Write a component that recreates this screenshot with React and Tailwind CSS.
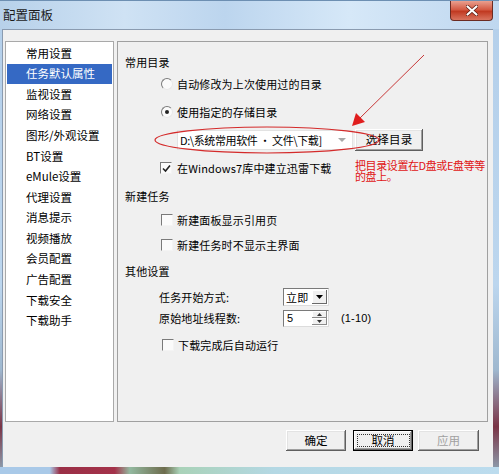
import React from "react";

const cjk = "font-['Noto_Sans_CJK_SC','Microsoft_YaHei',sans-serif]";

const menu = [
  "常用设置",
  "任务默认属性",
  "监视设置",
  "网络设置",
  "图形/外观设置",
  "BT设置",
  "eMule设置",
  "代理设置",
  "消息提示",
  "视频播放",
  "会员配置",
  "广告配置",
  "下载安全",
  "下载助手",
];

function Radio({ checked }) {
  return (
    <span className="w-[12px] h-[12px] rounded-full border border-t-[#7a7a7a] border-l-[#7a7a7a] border-r-[#e8e8e8] border-b-[#e8e8e8] bg-[#fafafa] flex items-center justify-center shrink-0">
      {checked && <span className="w-[4px] h-[4px] rounded-full bg-[#222]" />}
    </span>
  );
}

function Check({ checked }) {
  return (
    <span className="w-[12px] h-[12px] border border-t-[#7a7a7a] border-l-[#7a7a7a] border-r-[#f4f4f4] border-b-[#f4f4f4] bg-[#fbfbfb] flex items-center justify-center shrink-0">
      {checked && (
        <svg width="9" height="9" viewBox="0 0 9 9">
          <path d="M1 4.5 L3.5 7 L8 1.5" fill="none" stroke="#222" strokeWidth="1.6" />
        </svg>
      )}
    </span>
  );
}

function Btn({ children, focused, disabled, className = "" }) {
  return (
    <div
      className={
        "h-[21px] bg-[#f0f0f0] flex items-center justify-center text-[11.5px] leading-none " +
        (focused
          ? "border border-black shadow-[inset_-1px_-1px_0_#696969,inset_1px_1px_0_#ffffff,inset_-2px_-2px_0_#a0a0a0] "
          : "shadow-[inset_-1px_-1px_0_#5f5f5f,inset_1px_1px_0_#ffffff,inset_-2px_-2px_0_#a0a0a0,inset_2px_2px_0_#e3e3e3] ") +
        (disabled ? "text-[#a0a0a0] " : "text-black ") +
        className
      }
    >
      {focused ? (
        <span className="border border-dotted border-[#333] px-[14px] h-[13px] flex items-center">{children}</span>
      ) : (
        children
      )}
    </div>
  );
}

function Row({ className = "", children }) {
  return (
    <div className={"h-[20px] flex items-center text-[11px] tracking-[0.15px] leading-none " + className}>
      {children}
    </div>
  );
}

export default function App() {
  return (
    <div
      className={
        "relative w-[499px] h-[474px] overflow-hidden flex flex-col bg-[linear-gradient(180deg,#b4cfea_0%,#bcd6ee_60%,#9fb8cf_78%,#7a3446_90%,#8fa9b8_100%)] " +
        cjk
      }
    >
      {/* title bar */}
      <div className="h-[29px] shrink-0 flex items-center justify-between border-t border-[#6d8fb2] bg-[linear-gradient(90deg,#b7d1ea_0%,#cfe2f4_25%,#bcd5ee_45%,#d6e8f8_70%,#bfd7ef_100%)]">
        <span className="pl-[3px] text-[12.5px] text-[#1b1b1b] leading-none">配置面板</span>
        <div className="self-start w-[43px] h-[20px] mr-[6px] rounded-b-[4px] border border-t-0 border-[#6b2b22] bg-[linear-gradient(180deg,#e9a08f_0%,#d45a43_45%,#c13a22_55%,#d9745f_100%)] flex items-center justify-center">
          <svg width="12" height="11" viewBox="0 0 12 11">
            <path d="M1.5 1.5 L10.5 9.5 M10.5 1.5 L1.5 9.5" stroke="#5a1a10" strokeWidth="3.6" strokeLinecap="round" />
            <path d="M1.5 1.5 L10.5 9.5 M10.5 1.5 L1.5 9.5" stroke="#ffffff" strokeWidth="2.2" strokeLinecap="round" />
          </svg>
        </div>
      </div>

      {/* client area */}
      <div className="ml-[2px] w-[491px] h-[438px] shrink-0 bg-[#f0f0f0] border-l border-t border-[#8a9bb0] flex flex-col">
        <div className="flex pt-[11px] pl-[2px] gap-[3px]">
          {/* left list */}
          <div className="w-[109px] h-[381px] bg-white border border-[#a9a9a9] pt-[1px] px-[1px]">
            {menu.map((m, i) => (
              <div
                key={m}
                className={
                  "h-[20.6px] flex items-center pl-[19px] text-[11.5px] leading-none " +
                  (i === 1 ? "bg-[#3569c4] text-white" : "text-black")
                }
              >
                {m}
              </div>
            ))}
          </div>

          {/* right panel */}
          <div className="w-[371px] h-[381px] border border-[#a0a0a0] flex flex-col pt-[10px] text-black">
            <Row className="pl-[7px]">常用目录</Row>
            <Row className="pl-[43px] gap-[4px] mt-[2px]">
              <Radio />
              <span>自动修改为上次使用过的目录</span>
            </Row>
            <Row className="pl-[43px] gap-[4px] mt-[8px]">
              <Radio checked />
              <span>使用指定的存储目录</span>
            </Row>
            <Row className="pl-[59px] mt-[8px] gap-[2px]">
              <div className="w-[176px] h-[20px] bg-white border border-[#e2e2e2] flex items-center justify-between pl-[2px] pr-[6px] overflow-hidden">
                <span className="whitespace-nowrap text-[11px] tracking-[-0.4px]">D:\系统常用软件 · 文件\下载]</span>
                <svg width="8" height="5" viewBox="0 0 8 5" className="shrink-0">
                  <path d="M0 0 H8 L4 4 Z" fill="#a8a8a8" />
                </svg>
              </div>
              <Btn className="w-[68px] h-[22px]">选择目录</Btn>
            </Row>
            <Row className="pl-[42px] gap-[5px] mt-[8px]">
              <Check checked />
              <span>在Windows7库中建立迅雷下载</span>
            </Row>
            <Row className="pl-[7px] mt-[8px]">新建任务</Row>
            <Row className="pl-[43px] gap-[4px] mt-[4px]">
              <Check />
              <span>新建面板显示引用页</span>
            </Row>
            <Row className="pl-[43px] gap-[4px] mt-[5px]">
              <Check />
              <span>新建任务时不显示主界面</span>
            </Row>
            <Row className="pl-[7px] mt-[6px]">其他设置</Row>
            <Row className="pl-[41px] mt-[6px]">
              <span className="w-[124px]">任务开始方式:</span>
              <div className="w-[46px] h-[18px] bg-white border border-t-[#7a7a7a] border-l-[#7a7a7a] border-r-[#dcdcdc] border-b-[#dcdcdc] flex items-center justify-between pl-[2px] pr-[1px]">
                <span>立即</span>
                <span className="w-[15px] h-[14px] bg-[#f0f0f0] shadow-[inset_-1px_-1px_0_#696969,inset_1px_1px_0_#ffffff] flex items-center justify-center">
                  <svg width="7" height="4" viewBox="0 0 7 4">
                    <path d="M0 0 H7 L3.5 4 Z" fill="#000" />
                  </svg>
                </span>
              </div>
            </Row>
            <Row className="pl-[41px] mt-[1px]">
              <span className="w-[124px]">原始地址线程数:</span>
              <div className="w-[46px] h-[17px] bg-white border border-t-[#7a7a7a] border-l-[#7a7a7a] border-r-[#dcdcdc] border-b-[#dcdcdc] flex items-center justify-between pl-[3px] pr-[1px]">
                <span className="font-['Liberation_Sans',sans-serif]">5</span>
                <span className="w-[15px] h-[14px] flex flex-col">
                  <span className="flex-1 bg-[#f0f0f0] shadow-[inset_-1px_-1px_0_#8a8a8a,inset_1px_1px_0_#ffffff] flex items-center justify-center">
                    <svg width="5" height="3" viewBox="0 0 5 3">
                      <path d="M0 3 H5 L2.5 0 Z" fill="#333" />
                    </svg>
                  </span>
                  <span className="flex-1 bg-[#f0f0f0] shadow-[inset_-1px_-1px_0_#8a8a8a,inset_1px_1px_0_#ffffff] flex items-center justify-center">
                    <svg width="5" height="3" viewBox="0 0 5 3">
                      <path d="M0 0 H5 L2.5 3 Z" fill="#333" />
                    </svg>
                  </span>
                </span>
              </div>
              <span className="ml-[12px] font-['Liberation_Sans',sans-serif] text-[11px]">(1-10)</span>
            </Row>
            <Row className="pl-[44px] gap-[4px] mt-[7px]">
              <Check />
              <span>下载完成后自动运行</span>
            </Row>
          </div>
        </div>

        {/* dialog buttons */}
        <div className="flex justify-end pr-[14px] mt-[8px]">
          <Btn className="w-[60px]">确定</Btn>
          <Btn focused className="w-[60px] ml-[7px]">取消</Btn>
          <Btn disabled className="w-[61px] ml-[5px]">应用</Btn>
        </div>
      </div>

      {/* bottom frame strip */}
      <div className="flex-1 bg-[linear-gradient(90deg,#a9c9e8_0%,#a9c9e8_10%,#9a2f46_12%,#a4324a_23%,#93b9a0_26%,#6d6c4d_33%,#a9d2b8_36%,#b4d8e4_55%,#bcdcee_100%)]" />

      {/* annotation overlay */}
      <svg className="absolute left-0 top-0 pointer-events-none" width="499" height="474" viewBox="0 0 499 474">
        <ellipse cx="267" cy="140" rx="112" ry="13" fill="none" stroke="#d42a2a" strokeWidth="1.2" />
        <line x1="424" y1="55" x2="359" y2="119" stroke="#c83838" strokeWidth="1" />
        <path d="M352 126 L356 113 L365 122 Z" fill="#e01e1e" />
      </svg>
      <div className="absolute left-[355px] top-[160px] text-[11px] leading-[11px] tracking-[-0.4px] text-[#e01414] whitespace-nowrap">
        把目录设置在D盘或E盘等等
        <br />
        的盘上。
      </div>
    </div>
  );
}
